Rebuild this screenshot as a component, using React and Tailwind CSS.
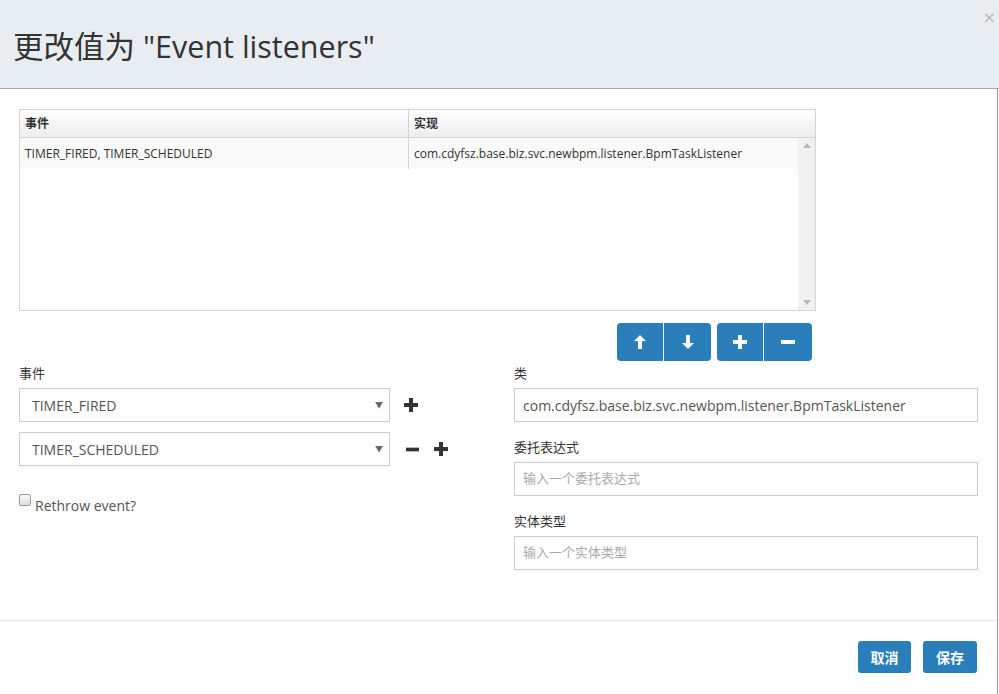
import React from "react";

const FONT = '"Open Sans", "Noto Sans CJK SC", sans-serif';

function PlusIcon({ size = 14, color = "#333" }) {
  return (
    <svg width={size} height={size} viewBox="0 0 14 14">
      <rect x="5" y="0" width="4" height="14" fill={color} />
      <rect x="0" y="5" width="14" height="4" fill={color} />
    </svg>
  );
}

function MinusIcon({ size = 14, color = "#333" }) {
  return (
    <svg width={size} height={size} viewBox="0 0 14 14">
      <rect x="0" y="5" width="14" height="4" fill={color} />
    </svg>
  );
}

function ArrowIcon({ down = false }) {
  return (
    <svg width="12" height="14" viewBox="0 0 12 14" className={down ? "rotate-180" : ""}>
      <path d="M6 0 L12 6 L8 6 L8 14 L4 14 L4 6 L0 6 Z" fill="#fff" />
    </svg>
  );
}

function Select({ value }) {
  return (
    <div className="w-[371px] h-[34px] border border-[#ccc] flex items-center justify-between pl-[12px] pr-[6px] text-[14px] text-[#555]">
      <span>{value}</span>
      <span className="text-[8px] text-[#666]">▼</span>
    </div>
  );
}

function Field({ label, value, placeholder }) {
  return (
    <div className="flex flex-col">
      <div className="h-[20px] text-[13px] text-[#333] leading-[20px] -mt-[6px] mb-[5px]">{label}</div>
      <div className="w-[464px] h-[34px] border border-[#ccc] flex items-center px-[8px] text-[14px]">
        {value ? (
          <span className="text-[#555]">{value}</span>
        ) : (
          <span className="text-[#a9a9a9] text-[13px]">{placeholder}</span>
        )}
      </div>
    </div>
  );
}

export default function App() {
  return (
    <div className="w-[999px] h-[694px] bg-white overflow-hidden" style={{ fontFamily: FONT }}>
      {/* Header */}
      <div className="relative h-[89px] bg-[#e8edf1] border-b border-[#a3aab0] flex items-center pl-[13px] pt-[6px]">
        <h1 className="text-[30.5px] text-[#333] font-normal">更改值为 "Event listeners"</h1>
        <span className="absolute right-[4px] top-[8px] text-[20px] leading-none text-[#b3b8bd]">×</span>
      </div>

      {/* Body */}
      <div className="w-[998px] h-[605px] border-r border-[#9a9a9a] flex flex-col">
        <div className="pl-[19px] pt-[20px] h-[531px]">
          {/* Table */}
          <div className="w-[797px] border border-[#d4d4d4]">
            <div className="flex h-[28px] bg-linear-to-b from-white to-[#ededed] border-b border-[#d4d4d4] text-[12px] font-bold text-[#333]">
              <div className="w-[389px] border-r border-[#d4d4d4] flex items-center px-[5px]">事件</div>
              <div className="flex-1 flex items-center px-[5px]">实现</div>
            </div>
            <div className="flex h-[172px]">
              <div className="flex-1">
                <div className="flex h-[31px] bg-[#fafafa] text-[12px] text-[#333]">
                  <div className="w-[389px] border-r border-[#d4d4d4] flex items-center px-[5px]">TIMER_FIRED, TIMER_SCHEDULED</div>
                  <div className="flex-1 flex items-center px-[5px]">com.cdyfsz.base.biz.svc.newbpm.listener.BpmTaskListener</div>
                </div>
              </div>
              <div className="w-[17px] bg-[#f1f1f1] flex flex-col justify-between items-center py-[5px]">
                <svg width="8" height="5" viewBox="0 0 8 5"><path d="M4 0 L8 5 L0 5 Z" fill="#b5b5b5" /></svg>
                <svg width="8" height="5" viewBox="0 0 8 5"><path d="M0 0 L8 0 L4 5 Z" fill="#b5b5b5" /></svg>
              </div>
            </div>
          </div>

          {/* Toolbar buttons */}
          <div className="w-[797px] flex justify-end gap-[6px] pr-[4px] mt-[12px]">
            <div className="flex h-[38px] rounded-[4px] overflow-hidden bg-[#2a7fba]">
              <div className="w-[47px] flex items-center justify-center border-r border-white"><ArrowIcon /></div>
              <div className="w-[47px] flex items-center justify-center"><ArrowIcon down /></div>
            </div>
            <div className="flex h-[38px] rounded-[4px] overflow-hidden bg-[#2a7fba]">
              <div className="w-[47px] flex items-center justify-center border-r border-white"><PlusIcon size={14} color="#fff" /></div>
              <div className="w-[48px] flex items-center justify-center"><MinusIcon size={14} color="#fff" /></div>
            </div>
          </div>

          {/* Form */}
          <div className="flex mt-[8px]">
            <div className="w-[495px] flex flex-col">
              <div className="h-[20px] text-[13px] text-[#333] leading-[20px] -mt-[6px] mb-[5px]">事件</div>
              <div className="flex items-center">
                <Select value="TIMER_FIRED" />
                <div className="ml-[14px]"><PlusIcon size={14} /></div>
              </div>
              <div className="flex items-center mt-[10px]">
                <Select value="TIMER_SCHEDULED" />
                <div className="ml-[16px]"><MinusIcon size={13} /></div>
                <div className="ml-[15px]"><PlusIcon size={14} /></div>
              </div>
              <div className="flex items-end mt-[28px]">
                <div className="w-[12px] h-[12px] border border-[#999] rounded-[2px] bg-linear-to-b from-[#fafafa] to-[#dedede] mb-[10px]" />
                <span className="ml-[4px] text-[14px] text-[#555] leading-[20px]">Rethrow event?</span>
              </div>
            </div>
            <div className="flex flex-col gap-[21px]">
              <Field label="类" value="com.cdyfsz.base.biz.svc.newbpm.listener.BpmTaskListener" />
              <Field label="委托表达式" placeholder="输入一个委托表达式" />
              <Field label="实体类型" placeholder="输入一个实体类型" />
            </div>
          </div>
        </div>

        {/* Footer */}
        <div className="border-t border-[#e2e2e2] flex justify-end gap-[12px] pt-[20px] pr-[20px]">
          <button className="w-[53px] h-[32px] rounded-[3px] bg-[#2a7fba] text-white text-[14px] font-bold">取消</button>
          <button className="w-[54px] h-[32px] rounded-[3px] bg-[#2a7fba] text-white text-[14px] font-bold">保存</button>
        </div>
      </div>
    </div>
  );
}
